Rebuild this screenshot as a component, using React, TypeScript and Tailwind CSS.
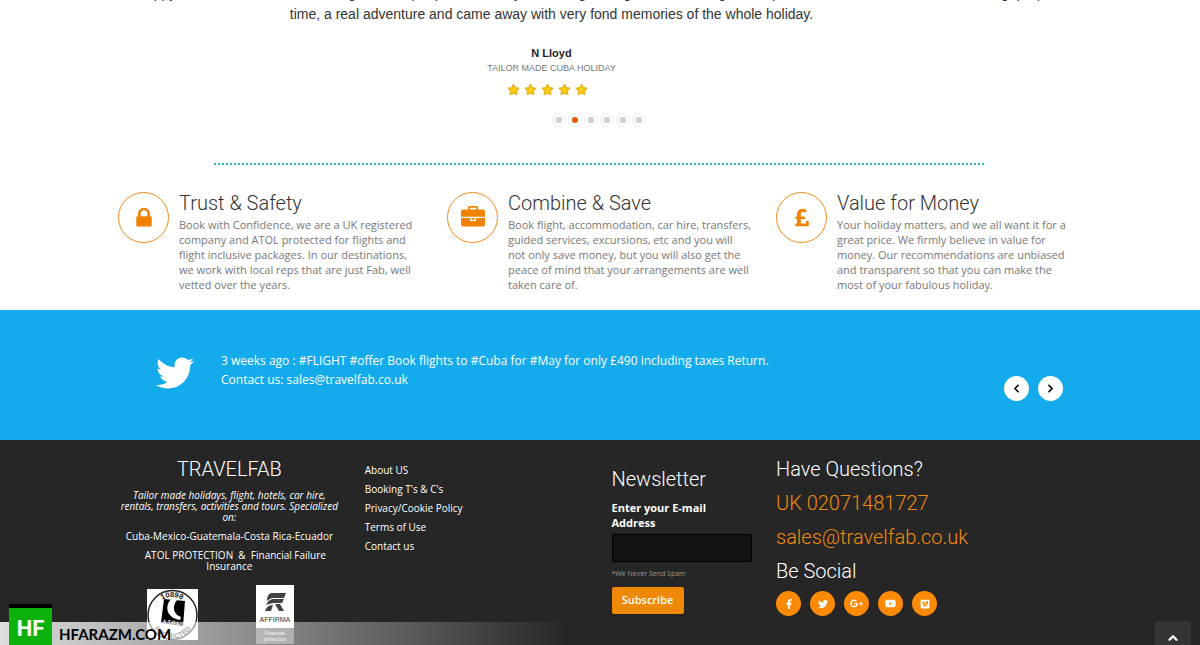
import { useState } from 'react';
import { FaFacebookF, FaTwitter, FaGooglePlusG, FaYoutube, FaVimeoSquare } from 'react-icons/fa';
import { ChevronLeft, ChevronRight, ChevronUp } from 'lucide-react';

const ICONS = {
  lock: 'M640 768h512v-192q0-106-75-181t-181-75-181 75-75 181v192zm832 96v576q0 40-28 68t-68 28h-960q-40 0-68-28t-28-68v-576q0-40 28-68t68-28h32v-192q0-184 132-316t316-132 316 132 132 316v192h32q40 0 68 28t28 68z',
  briefcase: 'M640 256h512v-128h-512v128zm1152 640v480q0 66-47 113t-113 47h-1472q-66 0-113-47t-47-113v-480h672v160q0 26 19 45t45 19h320q26 0 45-19t19-45v-160h672zm-768 0v128h-256v-128h256zm768-480v384h-1792v-384q0-66 47-113t113-47h352v-160q0-40 28-68t68-28h576q40 0 68 28t28 68v160h352q66 0 113 47t47 113z',
  pound: 'M1398 1139v349q0 14-9 23t-23 9h-930q-14 0-23-9t-9-23v-146q0-13 9.5-22.5t22.5-9.5h90v-333h-88q-14 0-23-9.5t-9-22.5v-127q0-14 9-23t23-9h88v-208q0-160 115.5-264t294.5-104q174 0 315 118 8 7 9 16t-5 16l-98 121q-7 9-16 9-9 2-17-5-4-4-21-15.5t-56-25.5-76-14q-71 0-115 39t-44 102v215h281q13 0 22.5 9t9.5 23v127q0 13-9.5 22.5t-22.5 9.5h-281v327h381v-158q0-13 9-22.5t23-9.5h153q14 0 23 9.5t9 22.5z',
};

const features = [
  {
    icon: ICONS.lock,
    title: 'Trust & Safety',
    text: 'Book with Confidence, we are a UK registered company and ATOL protected for flights and flight inclusive packages. In our destinations, we work with local reps that are just Fab, well vetted over the years.',
  },
  {
    icon: ICONS.briefcase,
    title: 'Combine & Save',
    text: 'Book flight, accommodation, car hire, transfers, guided services, excursions, etc and you will not only save money, but you will also get the peace of mind that your arrangements are well taken care of.',
  },
  {
    icon: ICONS.pound,
    title: 'Value for Money',
    text: 'Your holiday matters, and we all want it for a great price. We firmly believe in value for money. Our recommendations are unbiased and transparent so that you can make the most\u00a0of your fabulous holiday.',
  },
];

const links = ['About US', "Booking T's & C's", 'Privacy/Cookie Policy', 'Terms of Use', 'Contact us'];

const socials = [
  { name: 'Facebook', Icon: FaFacebookF, size: 10 },
  { name: 'Twitter', Icon: FaTwitter, size: 10 },
  { name: 'Google Plus', Icon: FaGooglePlusG, size: 13 },
  { name: 'YouTube', Icon: FaYoutube, size: 11 },
  { name: 'Vimeo', Icon: FaVimeoSquare, size: 10 },
];

function Star() {
  return (
    <svg viewBox="0 0 24 24" className="h-[13px] w-[13px]">
      <path
        d="M12 3l2.900 5.800 6.600 1-4.500 4.800 1 6.400-6-2.600-6 2.600 1-6.400-4.500-4.800 6.600-1z"
        fill="#ffcf10"
        stroke="#e8b420"
        strokeWidth="2.800"
        strokeLinejoin="round"
      />
    </svg>
  );
}

function Testimonial() {
  const [active, setActive] = useState(1);

  return (
    <section className="font-['Liberation_Sans',sans-serif]">
      <div className="mr-[90px] text-center">
        <p className="-mt-[17px] text-[14px] leading-[21px] text-[#333]">
          <span className="-mr-[90px] block whitespace-nowrap">
            Happy with the time we had looking around, people so friendly, and the guides great at showing us the places we had asked for. It was a long, proper
          </span>
          time, a real adventure and came away with very fond memories of the whole holiday.
        </p>
        <h4 className="mt-5 text-[11px] leading-4 font-bold text-[#222]">N Lloyd</h4>
        <p className="text-[9px] leading-[14px] text-[#777]">TAILOR MADE CUBA HOLIDAY</p>
        <div className="mt-2 mr-2 flex justify-center gap-1">
          {[1, 2, 3, 4, 5].map(n => (
            <Star key={n} />
          ))}
        </div>
      </div>
      <div className="mt-[17px] flex justify-center gap-[2px] pl-1">
        {[0, 1, 2, 3, 4, 5].map(i => (
          <button
            key={i}
            onClick={() => setActive(i)}
            aria-label={`Testimonial ${i + 1}`}
            className="flex h-[14px] w-[14px] items-center justify-center rounded-full border border-[#f0f0f0] bg-[#fafafa]"
          >
            <span className={i === active ? 'h-[6px] w-[6px] rounded-full bg-[#e8590c]' : 'h-[6px] w-[6px] rounded-full bg-[#d0d0d0]'} />
          </button>
        ))}
      </div>
    </section>
  );
}

function AtolBadge() {
  return (
    <svg viewBox="0 0 51 51" className="h-[51px] w-[51px] bg-white" role="img" aria-label="ATOL protected 10898">
      <defs>
        <path id="atol-top" d="M7 26a18 18 0 0 1 36 0" />
        <path id="atol-bottom" d="M3 27a22.500 22.500 0 0 0 45 0" />
      </defs>
      <circle cx="25.500" cy="26" r="24.500" fill="#fff" stroke="#222" strokeWidth="1.500" />
      <path d="M17 10l21 2-2 25-22-3z" fill="#000" />
      <path d="M24 10c-7 8-4 19 9 21l1-3c-8-3-9-11-4-17z" fill="#fff" />
      <text fontFamily="Liberation Sans" fontSize="7.500" fontWeight="bold" fill="#222">
        <textPath href="#atol-top" startOffset="50%" textAnchor="middle">10898</textPath>
      </text>
      <text x="24" y="35" fontFamily="Liberation Sans" fontSize="5" fontWeight="bold" fill="#fff" textAnchor="middle" transform="rotate(6 24 35)">
        A.T.O.L
      </text>
      <text fontFamily="Liberation Sans" fontSize="7" fontWeight="bold" fill="#333">
        <textPath href="#atol-bottom" startOffset="50%" textAnchor="middle">PROTECTED</textPath>
      </text>
    </svg>
  );
}

function AffirmaBadge() {
  return (
    <div className="flex w-[38px] flex-col items-center bg-white font-['Liberation_Sans',sans-serif]">
      <svg viewBox="0 0 24 20" className="mt-[7px] h-5 w-6">
        <path d="M9 1h14l-2 5H11c-3 0-5 1-7 3 0-5 2-8 5-8z" fill="#444" />
        <path d="M3 13c2-4 4-6 8-6h10l-2 4h-7c-4 0-6 1-9 2z" fill="#444" />
        <path d="M2 19c1-3 3-6 8-6l-2 6z" fill="#444" />
        <path d="M12 12h5l4 7h-5z" fill="#444" />
      </svg>
      <span className="mt-[2px] text-[7px] leading-[11px] text-[#333]">AFFIRMA</span>
      <span className="mt-[3px] w-full bg-[#777] py-[2px] text-center text-[5px] leading-[6px] text-[#eee]">
        Financial
        <br />
        protection
      </span>
    </div>
  );
}

export default function App() {
  const [email, setEmail] = useState('');

  return (
    <div className="relative flex h-screen flex-col overflow-hidden bg-white font-['Open_Sans',sans-serif]">
      <main className="pr-[7px]">
        <div className="mx-auto max-w-[987px] px-[15px]">
          <Testimonial />
          <hr className="mt-9 mr-[91px] ml-24 border-t-2 border-dotted border-[#2bb5b8]" />
          <section className="-mr-[30px] mt-[27px] grid grid-cols-3 pb-[18px]">
            {features.map(f => (
              <article key={f.title} className="flex gap-[10px] pr-6">
                <div className="flex h-[51px] w-[51px] shrink-0 items-center justify-center rounded-full border border-[#f08a1c]">
                  <svg viewBox="0 0 1792 1792" className="h-6 w-6 fill-[#f08200]">
                    <path d={f.icon} />
                  </svg>
                </div>
                <div>
                  <h3 className="mb-[2px] font-['Roboto',sans-serif] text-[20px] leading-[23px] font-light text-[#333]">{f.title}</h3>
                  <p className="text-[11px] leading-[15px] text-[#777]">{f.text}</p>
                </div>
              </article>
            ))}
          </section>
        </div>
      </main>

      <section className="bg-[#14abec] pr-[7px]">
        <div className="mx-auto flex h-[130px] max-w-[987px] items-start pr-[27px] pl-[53px] text-white">
          <FaTwitter className="mt-11 h-[38px] w-[38px] shrink-0" />
          <p className="mt-[41px] ml-[27px] flex-1 text-[12px] leading-[19px]">
            3 weeks ago : #FLIGHT #offer Book flights to #Cuba for #May for only £490 including taxes Return.
            <br />
            Contact us: sales@travelfab.co.uk
          </p>
          <div className="mt-[66px] flex gap-[9px]">
            <button aria-label="Previous tweet" className="flex h-[25px] w-[25px] items-center justify-center rounded-full bg-white text-black">
              <ChevronLeft size={13} strokeWidth={3} />
            </button>
            <button aria-label="Next tweet" className="flex h-[25px] w-[25px] items-center justify-center rounded-full bg-white text-black">
              <ChevronRight size={13} strokeWidth={3} />
            </button>
          </div>
        </div>
      </section>

      <footer className="flex-1 bg-[#262626] pr-[7px] text-white">
        <div className="mx-auto grid max-w-[987px] grid-cols-12 pt-3">
          <div className="col-span-3 pr-[9px] pl-[15px] text-center text-[10px] leading-[11px] font-medium">
            <h3 className="font-['Roboto',sans-serif] text-[20px] leading-[34px] font-light">TRAVELFAB</h3>
            <p className="mt-1 italic">Tailor made holidays, flight, hotels, car hire, rentals, transfers, activities and tours. Specialized on:</p>
            <p className="mt-2">Cuba-Mexico-Guatemala-Costa Rica-Ecuador</p>
            <p className="mt-2 indent-3">ATOL PROTECTION &nbsp;&amp;&nbsp; Financial Failure Insurance</p>
            <div className="mt-[13px] flex items-start justify-center gap-[58px] pr-[18px]">
              <div className="mt-1">
                <AtolBadge />
              </div>
              <AffirmaBadge />
            </div>
          </div>

          <ul className="col-span-3 px-[15px] pt-[9px] text-[10px] leading-[19px] font-medium">
            {links.map(link => (
              <li key={link}>
                <a href="#">{link}</a>
              </li>
            ))}
          </ul>

          <form className="col-span-2 px-[15px] pt-[10px]" onSubmit={e => e.preventDefault()}>
            <h3 className="font-['Roboto',sans-serif] text-[20px] leading-[34px] font-light">Newsletter</h3>
            <label htmlFor="email" className="mt-1 block pr-4 text-[11px] leading-[15px] font-bold">
              Enter your E-mail Address
            </label>
            <input
              id="email"
              type="email"
              value={email}
              onChange={e => setEmail(e.target.value)}
              className="mt-1 block h-7 w-[140px] rounded-[2px] border border-black bg-[#131313] px-2 text-[11px] outline-none"
            />
            <p className="mt-[6px] text-[7px] leading-3 text-[#999]">*We Never Send Spam</p>
            <button type="submit" className="mt-[7px] h-[27px] w-[72px] rounded-[2px] bg-[#f08808] text-[11px] font-semibold">
              Subscribe
            </button>
          </form>

          <div className="col-span-4 px-[15px] font-['Roboto',sans-serif] text-[20px] leading-[34px] font-light">
            <h3>Have Questions?</h3>
            <a href="tel:02071481727" className="block text-[#f08a10]">UK 02071481727</a>
            <a href="mailto:sales@travelfab.co.uk" className="block text-[#f08a10]">sales@travelfab.co.uk</a>
            <h3>Be Social</h3>
            <div className="mt-[3px] flex gap-[9px]">
              {socials.map(({ name, Icon, size }) => (
                <a key={name} href="#" aria-label={name} className="flex h-[25px] w-[25px] items-center justify-center rounded-full bg-[#fc8a04]">
                  <Icon size={size} />
                </a>
              ))}
            </div>
          </div>
        </div>
      </footer>

      <button aria-label="Back to top" className="absolute right-[9px] bottom-0 flex h-6 w-9 items-end justify-center rounded-t-[3px] bg-[#353535] text-white">
        <ChevronUp size={14} strokeWidth={4} />
      </button>

      {/* Credit bar */}
      <div className="absolute bottom-0 left-0 flex h-[23px] w-[570px] items-end bg-linear-to-r from-white/85 to-white/0 pl-[9px] font-['Lato',sans-serif]">
        <div className="flex h-[41px] w-[43px] items-center justify-center border-t-4 border-black bg-[#0cb10c] pt-1 font-['Roboto',sans-serif] text-[22px] leading-none font-bold text-white">HF</div>
        <span className="ml-[7px] text-[15px] leading-[22px] font-bold text-black">HFARAZM.COM</span>
      </div>
    </div>
  );
}
